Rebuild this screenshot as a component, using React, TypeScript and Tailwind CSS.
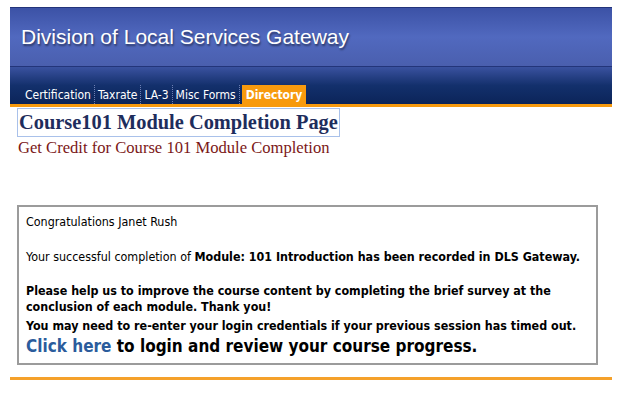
const tabs = ["Certification", "Taxrate", "LA-3", "Misc Forms"]

export default function App() {
  return (
    <div className="w-[620px] h-[397px] bg-white overflow-hidden pt-[7px]">
      <div className="mx-[10px] w-[602px]">
        <div className="h-[59px] border-t border-[#23347a] bg-gradient-to-b from-[#3c52a6] via-[#5169bf] to-[#4a5fae] flex items-center pl-[11px]">
          <h1
            className="text-white text-[21px] leading-none pb-[2px] [text-shadow:1px_2px_2px_rgba(0,0,0,0.45)]"
            style={{ fontFamily: '"Liberation Sans", Arial, sans-serif' }}
          >
            Division of Local Services Gateway
          </h1>
        </div>
        <div className="h-[38px] border-t border-[#23357a] bg-gradient-to-b from-[#3a52a0] via-[#13306c] to-[#0b2459] flex items-end pl-[12px]">
          <div
            className="flex items-end h-[19px] text-[12px] text-white"
            style={{ fontFamily: '"DejaVu Sans Condensed", Tahoma, sans-serif' }}
          >
            {tabs.map((t) => (
              <span key={t} className="h-full flex items-center px-[3px] border-r border-dotted border-[#6d7fb3]">
                {t}
              </span>
            ))}
            <span className="h-full flex items-center px-[4px] ml-[2px] bg-[#f79a0e] font-bold">Directory</span>
          </div>
        </div>
        <div className="h-[3px] bg-[#f79a0e]" />
      </div>

      <div className="ml-[17px] mt-[1px] w-[323px] h-[29px] border border-[#a9c1ea] flex items-center pl-[1px]">
        <h2
          className="text-[20.4px] font-bold text-[#1e2d5c] leading-none whitespace-nowrap"
          style={{ fontFamily: '"Liberation Serif", Georgia, serif' }}
        >
          Course101 Module Completion Page
        </h2>
      </div>
      <p
        className="ml-[18px] mt-[1px] text-[16.6px] text-[#7b1717] leading-[20px]"
        style={{ fontFamily: '"Liberation Serif", Georgia, serif' }}
      >
        Get Credit for Course 101 Module Completion
      </p>

      <div
        className="ml-[17px] mt-[47px] w-[581px] h-[160px] border-2 border-[#9b9b9b] px-[7px] pt-[7px] text-[12.4px] text-black leading-[16px]"
        style={{ fontFamily: '"DejaVu Sans Condensed", Tahoma, sans-serif' }}
      >
        <p>Congratulations Janet Rush</p>
        <p className="mt-[19px]">
          Your successful completion of <b>Module: 101 Introduction has been recorded in DLS Gateway.</b>
        </p>
        <p className="mt-[18px] font-bold">
          Please help us to improve the course content by completing the brief survey at the conclusion of each module. Thank you!
        </p>
        <p className="mt-[3px] font-bold">You may need to re-enter your login credentials if your previous session has timed out.</p>
        <p className="text-[17px] font-bold leading-[22px] mt-[1px]">
          <a className="text-[#2b5c9c]">Click here</a> to login and review your course progress.
        </p>
      </div>

      <div className="ml-[10px] mt-[12px] w-[602px] h-[3px] bg-[#f5a12a]" />
    </div>
  )
}
